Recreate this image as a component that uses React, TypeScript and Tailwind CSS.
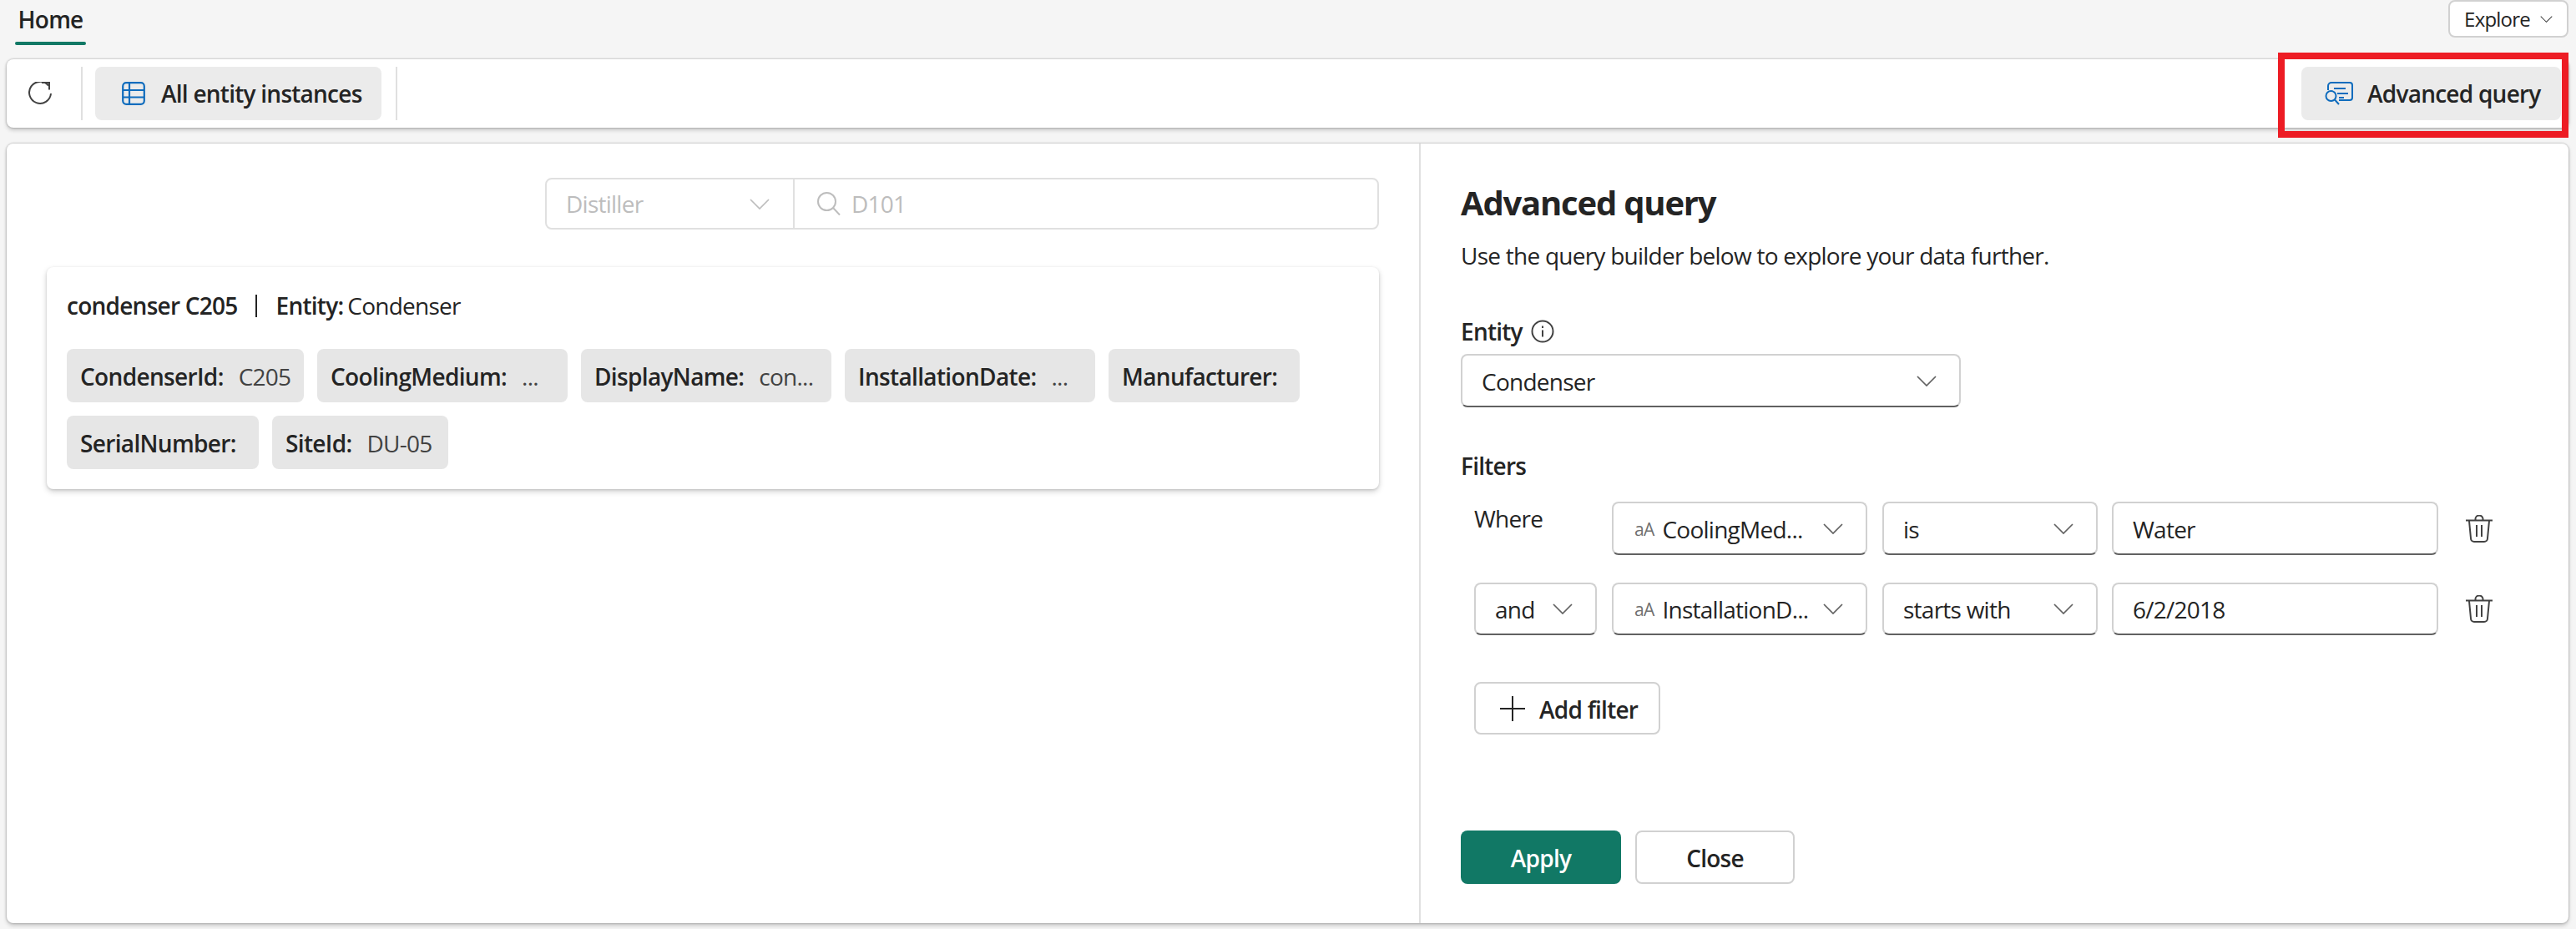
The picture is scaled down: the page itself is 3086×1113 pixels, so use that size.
import React from "react";

function Chevron({ className = "w-6 h-[13px] text-[#616161]" }: { className?: string }) {
  return (
    <svg viewBox="0 0 24 13" fill="none" stroke="currentColor" strokeWidth="1.7" className={className + " shrink-0"}>
      <path d="M1 1l11 11L23 1" />
    </svg>
  );
}

function Trash() {
  return (
    <svg viewBox="0 0 32 33" fill="none" stroke="#424242" strokeWidth="2" className="w-8 h-[33px] shrink-0">
      <path d="M0 6.5h32M11.5 6.5V4.5a4.5 4 0 0 1 9 0v2M4 7l2 21a4 4 0 0 0 4 4h12a4 4 0 0 0 4-4l2-21M13 12v14M19 12v14" />
    </svg>
  );
}

function Select({ w, children, h = "h-[64px]", chevron = true }: { w: string; children: React.ReactNode; h?: string; chevron?: boolean }) {
  return (
    <div className={`${w} ${h} flex items-center justify-between shrink-0 rounded-lg bg-white border-2 border-[#d1d1d1] border-b-[#616161] pl-[23px] pr-[27px]`}>
      <span className="flex items-center pt-[1px]">{children}</span>
      {chevron && <Chevron />}
    </div>
  );
}

function Chip({ w, label, value }: { w: string; label: string; value?: string }) {
  return (
    <div className={`${w} h-16 flex items-center gap-[18px] rounded-lg bg-[#e6e6e6] px-4 pt-[2px] whitespace-nowrap overflow-hidden`}>
      <span className="font-semibold tracking-[-0.65px]">{label}</span>
      {value && <span className="text-[#424242]">{value}</span>}
    </div>
  );
}

function FieldText({ children }: { children: React.ReactNode }) {
  return (
    <span className="flex items-center gap-[10px] whitespace-nowrap">
      <span className="ml-[2px] text-[21px] text-[#707070]">aA</span>
      <span>{children}</span>
    </span>
  );
}

export default function App() {
  return (
    <div className="h-[1113px] w-full overflow-hidden bg-[#f5f5f5] text-[28px] leading-10 text-[#242424] font-['Open_Sans',sans-serif] tracking-[-0.75px] pl-2 pr-[9px]">
      {/* tabs */}
      <div className="h-[71px] flex items-start justify-between">
        <div className="ml-[10px] w-[85px] h-[54px] flex flex-col items-center">
          <span className="h-[50px] pt-[3px] font-semibold leading-10">Home</span>
          <span className="h-1 w-full rounded-sm bg-[#117865]"></span>
        </div>
        <div className="w-[144px] h-[45px] flex items-center gap-3 justify-center rounded-lg bg-white border-2 border-[#d1d1d1] text-[24px] tracking-[-0.8px]">
          <span>Explore</span>
          <Chevron className="w-[15px] h-2 text-[#424242]" />
        </div>
      </div>

      {/* toolbar */}
      <div className="relative h-[82px] flex items-center justify-between rounded-lg bg-white pl-[26px] pr-[9px] shadow-[0_0_2px_1px_rgba(0,0,0,0.16),0_3px_5px_rgba(0,0,0,0.18)]">
        <div className="flex items-center h-16">
          <svg viewBox="0 0 28 28" fill="none" stroke="#424242" strokeWidth="2" className="w-7 h-7 shrink-0">
            <path d="M24 4.5A13 13 0 1 0 27 14M16 1h9v8.5" />
          </svg>
          <span className="ml-[35px] w-0.5 h-16 bg-[#e0e0e0]"></span>
          <div className="ml-[15px] w-[343px] h-16 flex items-center gap-[19px] pl-8 rounded-lg bg-[#ebebeb] font-semibold whitespace-nowrap">
            <svg viewBox="0 0 28 28" fill="none" stroke="#0f6cbd" strokeWidth="2.2" className="w-7 h-7 shrink-0">
              <rect x="1.2" y="1.2" width="25.6" height="25.6" rx="4" />
              <path d="M9 1.5v25M1.5 10h25M1.5 18.5h25" />
            </svg>
            <span>All entity instances</span>
          </div>
          <span className="ml-[17px] w-0.5 h-16 bg-[#e0e0e0]"></span>
        </div>
        <div className="w-[311px] h-16 flex items-center gap-[17px] pl-7 rounded-lg bg-[#ebebeb] font-semibold whitespace-nowrap">
          <svg viewBox="0 0 34 28" fill="none" stroke="#0f6cbd" strokeWidth="2" className="w-[34px] h-7 shrink-0">
            <path d="M4 10V5a4 4 0 0 1 4-4h22a3 3 0 0 1 3 3v15a3 3 0 0 1-3 3H17" />
            <path d="M11 8h14M15 14h13M17 19h6" />
            <circle cx="7.5" cy="17" r="6" />
            <path d="M12 21.5l5 5.5" />
          </svg>
          <span>Advanced query</span>
        </div>
        <div className="absolute -top-2 -bottom-3 right-0 w-[348px] border-8 border-[#ed1c24]"></div>
      </div>

      {/* main */}
      <div className="mt-[19px] h-[934px] flex rounded-lg bg-white shadow-[0_0_2px_1px_rgba(0,0,0,0.16),0_3px_5px_rgba(0,0,0,0.18)]">
        <div className="w-[1692px] shrink-0 pt-[41px] pl-12 pr-[48px]">
          <div className="flex justify-end">
            <div className="w-[999px] h-[62px] flex rounded-lg border-2 border-[#e0e0e0] text-[#bdbdbd]">
              <div className="w-[297px] flex items-center justify-between pl-[23px] pr-[28px] border-r-2 border-[#e0e0e0]">
                <span>Distiller</span>
                <Chevron className="w-6 h-[13px] text-[#bdbdbd]" />
              </div>
              <div className="flex-1 flex items-center gap-[13px] pl-[27px]">
                <svg viewBox="0 0 28 28" fill="none" stroke="#bdbdbd" strokeWidth="2" className="w-7 h-7 shrink-0">
                  <circle cx="11.5" cy="11.5" r="10.5" />
                  <path d="M19 19l8 8.5" />
                </svg>
                <span>D101</span>
              </div>
            </div>
          </div>
          <div className="mt-[45px] h-[266px] rounded-lg bg-white px-6 pt-[26px] shadow-[0_1px_3px_rgba(0,0,0,0.12),0_3px_7px_rgba(0,0,0,0.18)]">
            <div className="flex items-center h-10">
              <span className="font-semibold">condenser C205</span>
              <span className="ml-[21px] w-0.5 h-[27px] bg-[#242424]"></span>
              <span className="ml-[23px] font-semibold">Entity:</span>
              <span className="ml-[5px]">Condenser</span>
            </div>
            <div className="mt-[32px] flex flex-wrap gap-4">
              <Chip w="w-[284px]" label="CondenserId:" value="C205" />
              <Chip w="w-[300px]" label="CoolingMedium:" value="..." />
              <Chip w="w-[300px]" label="DisplayName:" value="con..." />
              <Chip w="w-[300px]" label="InstallationDate:" value="..." />
              <Chip w="w-[229px]" label="Manufacturer:" />
              <Chip w="w-[230px]" label="SerialNumber:" />
              <Chip w="w-[211px]" label="SiteId:" value="DU-05" />
            </div>
          </div>
        </div>

        <div className="flex-1 border-l-2 border-[#e0e0e0] pl-12 pt-[43px]">
          <h1 className="text-[40px] leading-14 font-bold tracking-[-1.2px]">Advanced query</h1>
          <p className="mt-[15px]">Use the query builder below to explore your data further.</p>
          <div className="mt-[51px] flex items-center gap-[10px]">
            <span className="font-semibold">Entity</span>
            <svg viewBox="0 0 28 28" fill="none" stroke="#424242" strokeWidth="2" className="w-7 h-7">
              <circle cx="14" cy="14" r="12.5" />
              <path d="M14 12.5v8M14 7.5v2.5" />
            </svg>
          </div>
          <div className="mt-[7px]">
            <Select w="w-[599px]"><span>Condenser</span></Select>
          </div>
          <div className="mt-[50px] font-semibold">Filters</div>

          <div className="mt-[23px] ml-4 flex flex-col gap-[33px]">
            <div className="flex items-start">
              <div className="w-[165px] shrink-0">Where</div>
              <Select w="w-[306px]"><FieldText>CoolingMed...</FieldText></Select>
              <div className="w-[18px] shrink-0"></div>
              <Select w="w-[258px]"><span>is</span></Select>
              <div className="w-[17px] shrink-0"></div>
              <Select w="w-[391px]" chevron={false}><span>Water</span></Select>
              <div className="ml-[33px] h-16 flex items-center"><Trash /></div>
            </div>
            <div className="flex items-start">
              <Select w="w-[147px]" h="h-[63px]"><span>and</span></Select>
              <div className="w-[18px] shrink-0"></div>
              <Select w="w-[306px]" h="h-[63px]"><FieldText>InstallationD...</FieldText></Select>
              <div className="w-[18px] shrink-0"></div>
              <Select w="w-[258px]" h="h-[63px]"><span>starts with</span></Select>
              <div className="w-[17px] shrink-0"></div>
              <Select w="w-[391px]" h="h-[63px]" chevron={false}><span>6/2/2018</span></Select>
              <div className="ml-[33px] h-[63px] flex items-center"><Trash /></div>
            </div>
          </div>

          <div className="mt-[56px] ml-4 w-[223px] h-[63px] flex items-center gap-[17px] pl-[29px] rounded-lg border-2 border-[#d1d1d1] font-semibold">
            <svg viewBox="0 0 30 30" fill="none" stroke="#242424" strokeWidth="2" className="w-[30px] h-[30px] shrink-0">
              <path d="M15 0v30M0 15h30" />
            </svg>
            <span className="pt-[2px]">Add filter</span>
          </div>

          <div className="mt-[115px] flex gap-[17px]">
            <div className="w-[192px] h-16 flex items-center justify-center pt-[2px] rounded-lg bg-[#117865] text-white font-semibold">Apply</div>
            <div className="w-[191px] h-16 flex items-center justify-center pt-[2px] rounded-lg border-2 border-[#d1d1d1] font-semibold">Close</div>
          </div>
        </div>
      </div>
    </div>
  );
}
